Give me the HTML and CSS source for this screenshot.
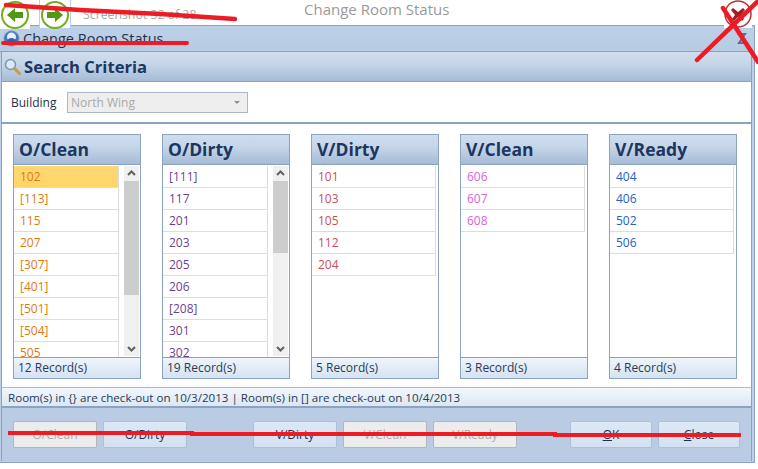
FILE: index.html
```html
<!DOCTYPE html>
<html lang="en">
<head>
  <meta charset="UTF-8">
  <meta name="viewport" content="width=device-width, initial-scale=1.0">
  <title>Change Room Status</title>
  <link rel="stylesheet" href="styles.css">
</head>
<body>
  <div class="page">
    <div class="topbar">
      <div class="nav-btn nav-back">
        <svg width="30" height="30" viewBox="0 0 30 30"><circle cx="15" cy="15" r="13" fill="#fff" stroke="#6fae1e" stroke-width="2"/><path d="M7 15l8-7v4h8v6h-8v4z" fill="#4f9a12"/></svg>
      </div>
      <div class="nav-btn nav-next">
        <svg width="30" height="30" viewBox="0 0 30 30"><circle cx="15" cy="15" r="13" fill="#fff" stroke="#6fae1e" stroke-width="2"/><path d="M23 15l-8-7v4H7v6h8v4z" fill="#4f9a12"/></svg>
      </div>
      <span class="shot-count">Screenshot 32 of 28</span>
      <span class="top-title">Change Room Status</span>
      <div class="close-btn">
        <svg width="28" height="28" viewBox="0 0 28 28"><circle cx="14" cy="14" r="13" fill="#fff" stroke="#b8333c" stroke-width="1.5"/><path d="M9 8l5 4 5-4 2 2-4 5 3 4-2 2-4-4-4 4-2-2 3-4-4-5z" fill="#a61c26"/></svg>
      </div>
    </div>

    <div class="window">
      <div class="win-title">
        <svg width="17" height="17" viewBox="0 0 17 17"><circle cx="8.500" cy="8.500" r="7.500" fill="#3f78c4" stroke="#7d8fa8"/><circle cx="8.500" cy="7" r="4.500" fill="#e8f0fa"/><path d="M4 10q4.500-4 9 0l-1 2H5z" fill="#2a63b4"/></svg>
        <span>Change Room Status</span>
        <svg class="pin" width="14" height="14" viewBox="0 0 14 14"><path d="M3 2h8L5 11h7" fill="none" stroke="#5b7088" stroke-width="2"/></svg>
      </div>

      <div class="panel">
        <div class="section-head">
          <svg width="19" height="19" viewBox="0 0 19 19"><circle cx="7.500" cy="7.500" r="5" fill="#dbe9f7" stroke="#7f95ad" stroke-width="1.500"/><path d="M11.500 11.500l5 5" stroke="#c79a45" stroke-width="3" stroke-linecap="round"/></svg>
          <span>Search Criteria</span>
        </div>

        <div class="filter">
          <label>Building</label>
          <div class="select">
            <span>North Wing</span>
            <i class="caret"></i>
          </div>
        </div>

        <div class="columns">
          <div class="col">
            <div class="col-head">O/Clean</div>
            <div class="col-body">
              <ul class="rooms c-oclean">
                <li class="selected">102</li>
                <li>[113]</li>
                <li>115</li>
                <li>207</li>
                <li>[307]</li>
                <li>[401]</li>
                <li>[501]</li>
                <li>[504]</li>
                <li>505</li>
              </ul>
              <div class="scroll">
                <svg class="arrow" width="15" height="15" viewBox="0 0 15 15"><path d="M4 9l3.500-3.500L11 9" fill="none" stroke="#606060" stroke-width="2"/></svg>
                <div class="thumb thumb-long"></div>
                <svg class="arrow arrow-down" width="15" height="15" viewBox="0 0 15 15"><path d="M4 6l3.500 3.500L11 6" fill="none" stroke="#606060" stroke-width="2"/></svg>
              </div>
            </div>
            <div class="col-foot">12 Record(s)</div>
          </div>

          <div class="col">
            <div class="col-head">O/Dirty</div>
            <div class="col-body">
              <ul class="rooms c-odirty">
                <li>[111]</li>
                <li>117</li>
                <li>201</li>
                <li>203</li>
                <li>205</li>
                <li>206</li>
                <li>[208]</li>
                <li>301</li>
                <li>302</li>
              </ul>
              <div class="scroll">
                <svg class="arrow" width="15" height="15" viewBox="0 0 15 15"><path d="M4 9l3.500-3.500L11 9" fill="none" stroke="#606060" stroke-width="2"/></svg>
                <div class="thumb thumb-short"></div>
                <svg class="arrow arrow-down" width="15" height="15" viewBox="0 0 15 15"><path d="M4 6l3.500 3.500L11 6" fill="none" stroke="#606060" stroke-width="2"/></svg>
              </div>
            </div>
            <div class="col-foot">19 Record(s)</div>
          </div>

          <div class="col">
            <div class="col-head">V/Dirty</div>
            <div class="col-body">
              <ul class="rooms wide c-vdirty">
                <li>101</li>
                <li>103</li>
                <li>105</li>
                <li>112</li>
                <li>204</li>
              </ul>
            </div>
            <div class="col-foot">5 Record(s)</div>
          </div>

          <div class="col">
            <div class="col-head">V/Clean</div>
            <div class="col-body">
              <ul class="rooms wide c-vclean">
                <li>606</li>
                <li>607</li>
                <li>608</li>
              </ul>
            </div>
            <div class="col-foot">3 Record(s)</div>
          </div>

          <div class="col">
            <div class="col-head">V/Ready</div>
            <div class="col-body">
              <ul class="rooms wide c-vready">
                <li>404</li>
                <li>406</li>
                <li>502</li>
                <li>506</li>
              </ul>
            </div>
            <div class="col-foot">4 Record(s)</div>
          </div>
        </div>

        <div class="legend">Room(s) in {} are check-out on 10/3/2013 | Room(s) in [] are check-out on 10/4/2013</div>

        <div class="actions">
          <button class="btn" disabled>O/Clean</button>
          <button class="btn">O/Dirty</button>
          <button class="btn push">V/Dirty</button>
          <button class="btn" disabled>V/Clean</button>
          <button class="btn" disabled>V/Ready</button>
          <button class="btn small push2"><u>O</u>K</button>
          <button class="btn small"><u>C</u>lose</button>
        </div>
      </div>
    </div>

    <svg class="scribbles" width="758" height="469" viewBox="0 0 758 469">
      <path d="M6 5L80 10L160 14L235 19" fill="none" stroke="#ed1c24" stroke-width="4.500" stroke-linecap="round"/>
      <path d="M3 43L187 43" fill="none" stroke="#ed1c24" stroke-width="4" stroke-linecap="round"/>
      <path d="M697 60L758 1M723 8L758 62" fill="none" stroke="#ed1c24" stroke-width="4.500" stroke-linecap="round"/>
      <path d="M8 433L192 433L192 434L555 434L555 435L741 435" fill="none" stroke="#ed1c24" stroke-width="4"/>
    </svg>
  </div>
</body>
</html>
```

FILE: styles.css
```css
* {
  box-sizing: border-box;
}
html, body {
  margin: 0;
  background: #fff;
}
.page {
  position: relative;
  width: 758px;
  height: 469px;
  overflow: hidden;
  font-family: "Open Sans", Arial, sans-serif;
  color: #1f2f4d;
}

/* top strip */
.topbar {
  position: relative;
  z-index: 2;
  display: flex;
  align-items: flex-start;
  height: 25px;
}
.nav-btn {
  flex: none;
  width: 32px;
  height: 29px;
  background: #fff;
}
.nav-back {
  width: 30px;
  margin-right: 9px;
}
.nav-next {
  border: 1px solid #b5cff5;
  border-top: none;
}
.nav-next svg {
  display: block;
}
.shot-count {
  width: 233px;
  padding: 6px 0 0 12px;
  font-size: 12.3px;
  color: #a8a8a8;
}
.top-title {
  font-size: 15px;
  line-height: 19px;
  color: #9a9a9a;
  white-space: nowrap;
}
.close-btn {
  margin-left: auto;
  margin-right: 6px;
  background: #fff;
  width: 28px;
  height: 28px;
}

/* window frame */
.window {
  width: 755px;
  height: 438px;
  background: #bccfe6;
  border-top: 1px solid #8ba2c0;
  border-right: 1px solid #8ba2c0;
  border-bottom: 1px solid #8ba2c0;
}
.win-title {
  display: flex;
  align-items: center;
  gap: 3px;
  height: 26px;
  padding: 0 6px 0 3px;
  font-size: 14.5px;
  color: #1f2f4d;
  background: linear-gradient(#bcd0e8, #b7cbe3);
  border-bottom: 1px solid #8ba2c0;
}
.pin {
  margin-left: auto;
}
.panel {
  margin: 0 2px 0 1px;
  border-left: 1px solid #8ba2c0;
  border-right: 1px solid #8ba2c0;
  background: #fff;
}
.section-head {
  display: flex;
  align-items: center;
  gap: 2px;
  height: 30px;
  padding-left: 1px;
  font-size: 16.6px;
  font-weight: 700;
  color: #1d3660;
  background: linear-gradient(#d0dded, #c6d6e9 40%, #a6bbd6);
  border-bottom: 1px solid #8ba2c0;
}

.filter {
  display: flex;
  align-items: center;
  height: 42px;
  padding-left: 9px;
  border-bottom: 2px solid #8ba2c0;
  font-size: 12px;
}
.filter label {
  width: 56px;
  color: #1f2f4d;
}
.select {
  display: flex;
  align-items: center;
  justify-content: space-between;
  width: 181px;
  height: 21px;
  padding: 0 7px 0 3px;
  background: #eee;
  border: 1px solid #aab8c8;
  color: #a9a9a9;
}
.caret {
  border-left: 3px solid transparent;
  border-right: 3px solid transparent;
  border-top: 3px solid #8f8f8f;
}

/* status columns */
.columns {
  display: flex;
  gap: 21px;
  height: 263px;
  padding: 10px 0 0 11px;
}
.col {
  display: flex;
  flex-direction: column;
  width: 128px;
  height: 245px;
  border: 1px solid #8ba2c0;
}
.col-head {
  flex: none;
  height: 30px;
  padding-left: 5px;
  font-size: 17.5px;
  font-weight: 700;
  line-height: 29px;
  color: #1d3660;
  background: linear-gradient(#cfdcee, #c6d6e9 40%, #a6bbd6);
  border-bottom: 1px solid #8ba2c0;
}
.col-body {
  flex: 1;
  display: flex;
  justify-content: space-between;
  height: 191px;
  overflow: hidden;
  padding-top: 1px;
}
.col-foot {
  flex: none;
  height: 21px;
  padding-left: 4px;
  font-size: 12px;
  line-height: 20px;
  color: #2a3a58;
  background: linear-gradient(#eff5fb, #d5e2f2);
  border-top: 1px solid #8ba2c0;
}
.rooms {
  width: 105px;
  margin: 0;
  padding: 0;
  list-style: none;
  font-size: 12px;
}
.rooms.wide {
  width: 124px;
}
.rooms li {
  height: 22px;
  padding-left: 6px;
  line-height: 21px;
  border-right: 1px solid #ddd;
  border-bottom: 1px solid #ddd;
}
.rooms li.selected {
  background: linear-gradient(#ffd874, #ffd666);
}
.c-oclean { color: #e07a10; }
.c-odirty { color: #6b3f96; }
.c-vdirty { color: #c9505a; }
.c-vclean { color: #d763dc; }
.c-vready { color: #1a62c4; }
.scroll {
  flex: none;
  width: 15px;
  height: 190px;
  margin-right: 1px;
  background: #f0f0f0;
  display: flex;
  flex-direction: column;
}
.arrow {
  flex: none;
  display: block;
}
.arrow-down {
  margin-top: auto;
}
.thumb {
  background: #cdcdcd;
}
.thumb-long {
  height: 114px;
}
.thumb-short {
  height: 72px;
}

.legend {
  height: 21px;
  padding-left: 6px;
  font-size: 11.6px;
  line-height: 19px;
  color: #2a3a58;
  background: linear-gradient(#f3f7fc, #dbe7f4);
  border-top: 1px solid #a9bcd4;
  border-bottom: 2px solid #8ba2c0;
}
.actions {
  display: flex;
  gap: 6px;
  height: 53px;
  padding: 13px 0 0 11px;
  background: #b9cce4;
}
.btn {
  width: 84px;
  height: 27px;
  padding: 0;
  font-family: inherit;
  font-size: 12px;
  color: #1f2f4d;
  background: linear-gradient(#dce8f6, #d3e1f2);
  border: 1px solid #adc0d8;
  border-radius: 2px;
}
.btn:disabled {
  color: #adadad;
  background: #ececec;
  border-color: #b5b5b5;
}
.btn.small {
  width: 82px;
}
.push {
  margin-left: 60px;
}
.push2 {
  margin-left: 47px;
}

/* red marks drawn on top of the capture */
.scribbles {
  position: absolute;
  left: 0;
  top: 0;
  z-index: 3;
  pointer-events: none;
}
```
